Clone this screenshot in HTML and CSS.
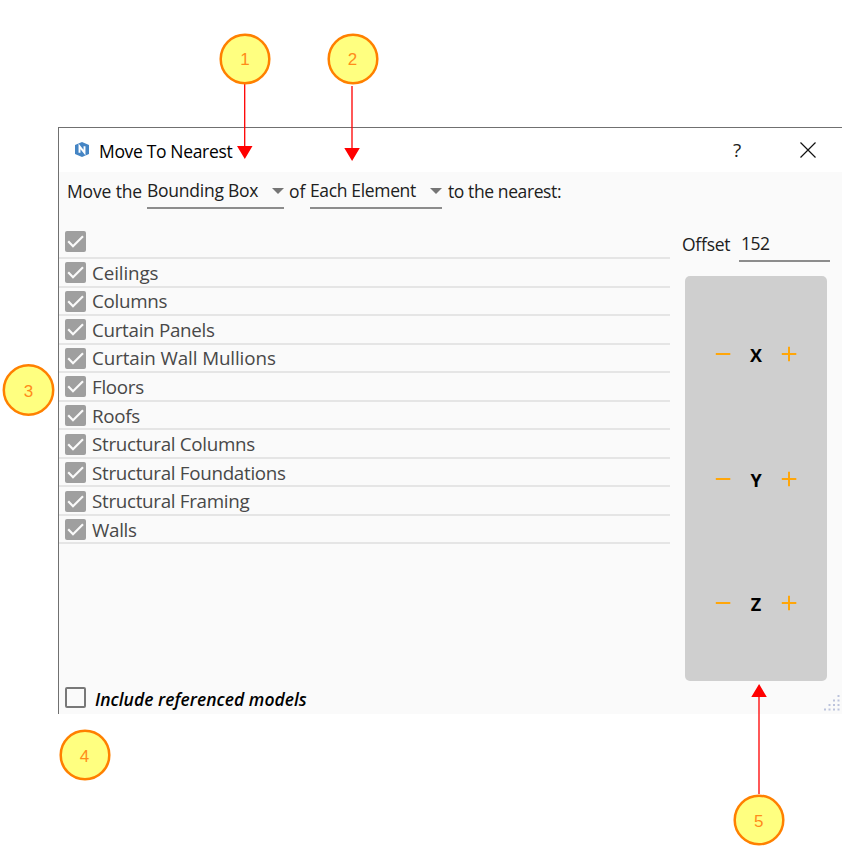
FILE: index.html
```html
<!DOCTYPE html>
<html lang="en">
<head>
<meta charset="utf-8">
<title>Move To Nearest</title>
<link rel="stylesheet" href="styles.css">
</head>
<body>
<svg class="defs" width="0" height="0" aria-hidden="true">
  <symbol id="checked" viewBox="0 0 21 21"><rect width="21" height="21" rx="2" fill="#9f9f9f"/><path d="M3.2 10.300 8 15.300 18 5.300" fill="none" stroke="#fafafa" stroke-width="2.200"/></symbol>
  <symbol id="minus" viewBox="0 0 16 16"><path d="M.8 8h14.500" stroke="#ffa60a" stroke-width="2"/></symbol>
  <symbol id="plus" viewBox="0 0 16 16"><path d="M.8 8h14.500M8 .8v14.400" stroke="#ffa60a" stroke-width="2"/></symbol>
  <symbol id="caret" viewBox="0 0 12 6"><path d="M0 0h12L6 6z" fill="#757575"/></symbol>
</svg>
<main class="window">
  <header class="titlebar">
    <svg class="logo" viewBox="0 0 14 15"><path d="M7 0 14 3v9L7 15 0 12V3z" fill="#4585c4"/><path d="M4.500 10.800V4.300l5 6.400V4.200" fill="none" stroke="#fff" stroke-width="1.900"/></svg>
    <h1 class="title">Move To Nearest</h1>
    <span class="help">?</span>
    <svg class="close" viewBox="0 0 16 16"><path d="M.5.5l15 15M15.500.5l-15 15" stroke="#111" stroke-width="1.200"/></svg>
  </header>
  <div class="sentence">
    <span class="t-move">Move the</span>
    <div class="select s-box"><span>Bounding Box</span><svg><use href="#caret"/></svg></div>
    <span class="t-of">of</span>
    <div class="select s-each"><span>Each Element</span><svg><use href="#caret"/></svg></div>
    <span class="t-to">to the nearest:</span>
  </div>
  <div class="content">
    <section class="left">
      <ul class="list">
        <li><svg><use href="#checked"/></svg></li>
        <li><svg><use href="#checked"/></svg><span class="loose">Ceilings</span></li>
        <li><svg><use href="#checked"/></svg><span>Columns</span></li>
        <li><svg><use href="#checked"/></svg><span>Curtain Panels</span></li>
        <li><svg><use href="#checked"/></svg><span class="loose">Curtain Wall Mullions</span></li>
        <li><svg><use href="#checked"/></svg><span>Floors</span></li>
        <li><svg><use href="#checked"/></svg><span>Roofs</span></li>
        <li><svg><use href="#checked"/></svg><span>Structural Columns</span></li>
        <li><svg><use href="#checked"/></svg><span>Structural Foundations</span></li>
        <li><svg><use href="#checked"/></svg><span>Structural Framing</span></li>
        <li><svg><use href="#checked"/></svg><span>Walls</span></li>
      </ul>
      <div class="include"><i class="box"></i><span>Include referenced models</span></div>
    </section>
    <aside class="right">
      <div class="offset"><span class="label">Offset</span><span class="field">152</span></div>
      <div class="axes">
        <div class="axis"><svg><use href="#minus"/></svg><b>X</b><svg><use href="#plus"/></svg></div>
        <div class="axis"><svg><use href="#minus"/></svg><b>Y</b><svg><use href="#plus"/></svg></div>
        <div class="axis"><svg><use href="#minus"/></svg><b>Z</b><svg><use href="#plus"/></svg></div>
      </div>
    </aside>
  </div>
  <svg class="grip" viewBox="0 0 16 16"><path d="M0 14.500h2M4.500 14.500h2M9 14.500h2M13.500 14.500h2M4.500 10h2M9 10h2M13.500 10h2M9 5.500h2M13.500 5.500h2M13.500 1h2" stroke="#bcc3dc" stroke-width="2"/></svg>
</main>
<svg class="callouts" viewBox="0 0 857 857">
  <g stroke="#f00" stroke-width="1.300"><path d="M244.700 84v64M352 86v64M759 794v-100"/></g>
  <g fill="#f00"><path d="M237 146h15.500l-7.700 13zM344.300 148h15.500l-7.700 13zM751.300 697h15.500l-7.700-13z"/></g>
  <g fill="#ffff80" stroke="#ff8000" stroke-width="2.500">
    <circle cx="245" cy="59" r="24.300"/><circle cx="353" cy="59" r="24.300"/><circle cx="28.500" cy="390" r="24.700"/><circle cx="85" cy="755" r="24.300"/><circle cx="759" cy="820" r="24.300"/>
  </g>
  <g class="numbers"><text x="245" y="65">1</text><text x="352.500" y="65">2</text><text x="28.500" y="396.500">3</text><text x="84.500" y="761.500">4</text><text x="758.800" y="826.500">5</text></g>
</svg>
</body>
</html>
```
FILE: styles.css
```css
* { box-sizing: border-box; }
body { margin: 0; width: 857px; height: 857px; padding: 127px 0 0 58px; background: #fff; position: relative; overflow: hidden; font: 17.5px/24px "Open Sans", "Noto Sans", sans-serif; color: #202020; }
.defs { position: absolute; }
.window { width: 784px; height: 587px; border: solid #707070; border-width: 1px 0 0 1px; background: #fafafa; display: flex; flex-direction: column; position: relative; white-space: nowrap; }
.titlebar { height: 44px; background: #fff; display: flex; align-items: center; padding: 0 26px 0 16px; flex: none; }
.logo { width: 14px; height: 15px; margin-top: -2px; }
.title { margin: 1px 0 0 10px; font-size: 17.5px; font-weight: 400; letter-spacing: -.34px; color: #000; flex: 1; }
.help { width: 10px; margin: -1px 57px 0 0; font-size: 19px; }
.close { width: 16px; height: 16px; }
.sentence { display: flex; height: 38px; padding-left: 8px; align-items: flex-start; flex: none; }
.sentence > span { padding-top: 7px; }
.select { height: 37px; border-bottom: 2px solid #8c8c8c; display: flex; justify-content: space-between; padding-top: 6px; }
.select svg { width: 12px; height: 6px; margin-top: 10px; }
.t-move { width: 80px; letter-spacing: -.15px; }
.s-box { width: 137px; letter-spacing: -.25px; }
.t-of { width: 26px; padding-left: 5px; }
.s-each { width: 132px; letter-spacing: -.35px; }
.t-to { padding-left: 6px; letter-spacing: -.4px; }
.content { flex: 1; display: flex; min-height: 0; }
.left { width: 611px; display: flex; flex-direction: column; justify-content: space-between; }
.list { list-style: none; margin: 0; padding: 14px 0 0; font-size: 18.8px; letter-spacing: -.3px; color: #484848; }
.list li { height: 28.550px; border-bottom: 2px solid #e5e5e5; display: flex; align-items: center; padding: 1px 0 0 6px; gap: 6px; }
.list li:first-child { height: 35px; }
.list .loose { letter-spacing: -.1px; }
.list svg { width: 21px; height: 21px; }
.include { height: 32px; display: flex; padding-left: 6px; font-size: 17.5px; font-weight: 600; font-style: italic; color: #000; letter-spacing: .02px; }
.include span { margin: 5px 0 0 9px; }
.box { width: 21px; height: 21px; margin-top: 5px; border: 2px solid #787878; border-radius: 2px; }
.right { width: 172px; padding: 12px 12px 0 12px; }
.offset { display: flex; height: 40px; }
.label { width: 57px; padding-top: 10px; letter-spacing: -.25px; }
.field { width: 91px; height: 40px; border-bottom: 2px solid #8c8c8c; padding: 9px 0 0 2px; letter-spacing: -.5px; }
.axes { margin: 14px 0 0 3px; width: 142px; height: 405px; border-radius: 5px; background: #cfcfcf; display: flex; flex-direction: column; justify-content: center; gap: 100.500px; padding-top: 2px; }
.axis { height: 24px; display: flex; justify-content: space-between; padding: 0 30px; color: #000; }
.axis svg { width: 16px; height: 16px; margin-top: 3px; }
.axis b { font-size: 18px; }
.grip { position: absolute; width: 16px; height: 16px; right: 2px; bottom: 3px; }
.callouts { position: absolute; left: 0; top: 0; width: 857px; height: 857px; pointer-events: none; }
.numbers { font: 17px "Liberation Sans", Arial, sans-serif; fill: #ff8c1a; text-anchor: middle; }
```
